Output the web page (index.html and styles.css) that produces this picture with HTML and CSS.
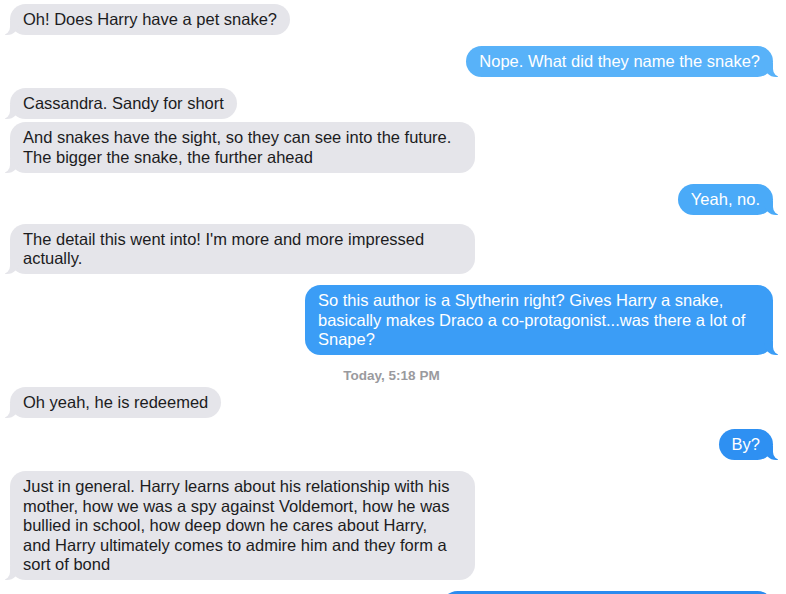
FILE: index.html
```html
<!DOCTYPE html>
<html lang="en">
<head>
<meta charset="utf-8">
<title>Messages</title>
<link rel="stylesheet" href="styles.css">
</head>
<body>
<div class="thread">
  <div class="msg in">Oh! Does Harry have a pet snake?</div>
  <div class="msg out c1 gap">Nope. What did they name the snake?</div>
  <div class="msg in gap">Cassandra. Sandy for short</div>
  <div class="msg in tight wide">And snakes have the sight, so they can see into the future.<br>The bigger the snake, the further ahead</div>
  <div class="msg out c2 gap">Yeah, no.</div>
  <div class="msg in gap-s wide">The detail this went into! I'm more and more impressed<br>actually.</div>
  <div class="msg out c3 gap wide-out">So this author is a Slytherin right? Gives Harry a snake,<br>basically makes Draco a co-protagonist...was there a lot of<br>Snape?</div>
  <div class="time">Today, 5:18 PM</div>
  <div class="msg in">Oh yeah, he is redeemed</div>
  <div class="msg out c4 gap">By?</div>
  <div class="msg in gap wide">Just in general. Harry learns about his relationship with his<br>mother, how we was a spy against Voldemort, how he was<br>bullied in school, how deep down he cares about Harry,<br>and Harry ultimately comes to admire him and they form a<br>sort of bond</div>
  <div class="msg out c5 gap cut">&nbsp;</div>
</div>
</body>
</html>
```

FILE: styles.css
```css
html, body {
  margin: 0;
  padding: 0;
  background: #ffffff;
  overflow: hidden;
}

.thread {
  display: flex;
  flex-direction: column;
  padding: 4px 13px 0 10px;
  font-family: "Liberation Sans", Arial, sans-serif;
  font-size: 16.5px;
  line-height: 19.5px;
}

.msg {
  position: relative;
  box-sizing: border-box;
  padding: 6px 13px 5.5px 13px;
  border-radius: 15.5px;
  white-space: nowrap;
}

.msg.in {
  align-self: flex-start;
  background: #e5e5ea;
  color: #1c1c1e;
}

.msg.out {
  align-self: flex-end;
  color: #ffffff;
}

.wide { width: 465px; }
.wide-out { width: 468px; }

.c1 { background: #58b2f9; }
.c2 { background: #4aaaf8; }
.c3 { background: #3b9df6; }
.c4 { background: #2e90f2; }
.c5 { background: #2b8bef; }

.gap { margin-top: 11px; }
.gap-s { margin-top: 9px; }
.tight { margin-top: 3px; }

.msg.in::before,
.msg.out::before {
  content: "";
  position: absolute;
  bottom: 0;
  width: 14px;
  height: 14px;
}

.msg.in::before {
  left: -5px;
  background: #e5e5ea;
  border-bottom-right-radius: 12px;
}

.msg.in::after {
  content: "";
  position: absolute;
  bottom: 0;
  left: -8px;
  width: 8px;
  height: 15px;
  background: #ffffff;
  border-bottom-right-radius: 8px;
}

.msg.out::before {
  right: -5px;
  background: inherit;
  border-bottom-left-radius: 12px;
}

.msg.out::after {
  content: "";
  position: absolute;
  bottom: 0;
  right: -8px;
  width: 8px;
  height: 15px;
  background: #ffffff;
  border-bottom-left-radius: 8px;
}

.time {
  align-self: center;
  margin: 13px 0 3px 0;
  font-size: 13.5px;
  line-height: 16px;
  font-weight: bold;
  color: #9a9a9e;
}

.cut {
  width: 331px;
}
```
